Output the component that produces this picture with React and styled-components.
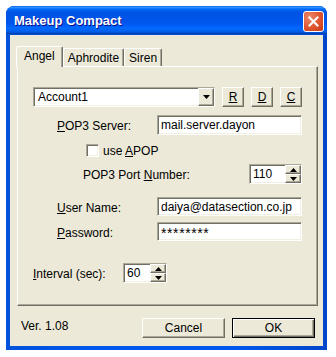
import React from "react";
import styled, { createGlobalStyle, css } from "styled-components";

const GlobalStyle = createGlobalStyle`
  body {
    margin: 0;
    background: #ffffff;
    font-family: "Liberation Sans", Arial, sans-serif;
  }
`;

const sunken = css`
  box-sizing: border-box;
  border-style: solid;
  border-width: 1px;
  border-color: #aca899 #ffffff #ffffff #aca899;
  box-shadow: inset 1px 1px #716f64, inset -1px -1px #f1efe2;
  background: #ffffff;
`;

const raised = css`
  box-sizing: border-box;
  border-style: solid;
  border-width: 1px;
  border-color: #ffffff #716f64 #716f64 #ffffff;
  box-shadow: inset -1px -1px #aca899;
  background: #ece9d8;
`;

const Page = styled.div`
  padding: 6px 0 0 6px;
`;

const Window = styled.div`
  width: 321px;
  height: 344px;
  display: flex;
  flex-direction: column;
  background: #0054e3;
  border-radius: 8px 8px 0 0;
  overflow: hidden;
`;

const TitleBar = styled.div`
  height: 29px;
  flex: none;
  display: flex;
  align-items: center;
  justify-content: space-between;
  padding: 0 3px 0 8px;
  background: linear-gradient(
    to bottom,
    #0058ee 0%,
    #3593ff 4%,
    #288eff 6%,
    #127dff 8%,
    #036ffc 10%,
    #0262ee 14%,
    #0057e5 20%,
    #0054e3 24%,
    #0055eb 56%,
    #005bf5 66%,
    #026afe 76%,
    #0062ef 86%,
    #0052d6 92%,
    #0040ab 94%,
    #0054e3 100%
  );
`;

const Title = styled.span`
  font-family: "Liberation Sans", Arial, sans-serif;
  font-weight: 700;
  font-size: 13px;
  color: #ffffff;
  text-shadow: 1px 1px #0f1089;
`;

const CloseButton = styled.div`
  width: 21px;
  height: 21px;
  box-sizing: border-box;
  border: 1px solid #ffffff;
  border-radius: 3px;
  background: radial-gradient(circle at 30% 30%, #e98a6c 0%, #e0552f 55%, #c4381a 100%);
  display: flex;
  align-items: center;
  justify-content: center;
  margin-top: 1px;
`;

const Frame = styled.div`
  flex: 1;
  display: flex;
  padding: 0 4px 4px 4px;
  background: linear-gradient(to right, #0052dc, #0058ee 30%, #0058ee 70%, #0046c8);
`;

const Client = styled.div`
  flex: 1;
  display: flex;
  flex-direction: column;
  background: #ece9d8;
  padding: 11px 5px 0 7px;
`;

const TabStrip = styled.div`
  height: 20px;
  display: flex;
  align-items: flex-end;
  margin-left: -1px;
  position: relative;
  z-index: 1;
`;

const Tab = styled.div`
  box-sizing: border-box;
  height: ${(p) => (p.$active ? 21 : 18)}px;
  margin-bottom: ${(p) => (p.$active ? -1 : 0)}px;
  padding: 0 ${(p) => (p.$active ? 7 : 4)}px;
  padding-bottom: ${(p) => (p.$active ? 2 : 0)}px;
  display: flex;
  align-items: center;
  font-size: 12px;
  color: #000000;
  background: #ece9d8;
  border-top: 1px solid #ffffff;
  border-left: 1px solid #ffffff;
  border-right: 1px solid #716f64;
  box-shadow: inset -1px 0 #aca899;
  border-radius: 2px 2px 0 0;
`;

const Panel = styled.div`
  box-sizing: border-box;
  height: 240px;
  border-style: solid;
  border-width: 1px;
  border-color: #ffffff #716f64 #716f64 #ffffff;
  box-shadow: inset -1px -1px #aca899;
  display: flex;
  flex-direction: column;
`;

const Row = styled.div`
  display: flex;
  align-items: center;
  height: ${(p) => p.$h}px;
  margin-top: ${(p) => p.$mt}px;
  padding-left: ${(p) => p.$indent}px;
  padding-right: 15px;
  gap: ${(p) => p.$gap || 0}px;
`;

const Label = styled.span`
  font-size: 12px;
  color: #000000;
  flex: ${(p) => (p.$w ? "none" : 1)};
  width: ${(p) => (p.$w ? `${p.$w}px` : "auto")};
  padding-top: 2px;
  white-space: nowrap;
`;

const U = styled.span`
  text-decoration: underline;
`;

const TextBox = styled.div`
  ${sunken};
  width: ${(p) => p.$w}px;
  height: 100%;
  flex: none;
  display: flex;
  align-items: center;
  padding-left: 3px;
  font-size: 12px;
  color: #000000;
  white-space: nowrap;
  overflow: hidden;
`;

const Masked = styled.span`
  font-size: 14px;
  letter-spacing: 0.6px;
  padding-top: 3px;
`;

const BoxText = styled.span`
  flex: 1;
  align-self: ${(p) => (p.$top ? "flex-start" : "center")};
  padding-top: ${(p) => (p.$top ? 2 : 0)}px;
`;

const Combo = styled(TextBox)`
  padding-left: 4px;
`;

const DropButton = styled.div`
  ${raised};
  width: 16px;
  height: 100%;
  flex: none;
  display: flex;
  align-items: center;
  justify-content: center;
`;

const SpinButtons = styled.div`
  width: 16px;
  height: 100%;
  flex: none;
  display: flex;
  flex-direction: column;
`;

const SpinHalf = styled.div`
  ${raised};
  flex: 1;
  display: flex;
  align-items: center;
  justify-content: center;
`;

const SmallButton = styled.div`
  ${raised};
  width: 22px;
  height: 100%;
  flex: none;
  display: flex;
  align-items: center;
  justify-content: center;
  font-size: 12px;
  color: #000000;
`;

const CheckBox = styled.div`
  ${sunken};
  width: 13px;
  height: 13px;
  flex: none;
`;

const CheckLabel = styled.span`
  font-size: 12px;
  color: #000000;
  margin-left: 4px;
`;

const Footer = styled.div`
  display: flex;
  align-items: center;
  height: 20px;
  margin-top: 12px;
  padding: 0 3px 0 4px;
  gap: 7px;
`;

const Version = styled.span`
  font-size: 12px;
  color: #000000;
  margin-right: auto;
  padding-bottom: 4px;
`;

const DialogButton = styled.div`
  ${raised};
  width: 83px;
  height: 100%;
  display: flex;
  align-items: center;
  justify-content: center;
  font-size: 12px;
  color: #000000;
  ${(p) =>
    p.$default &&
    css`
      border: 1px solid #000000;
      box-shadow: inset 1px 1px #ffffff, inset -1px -1px #716f64, inset -2px -2px #aca899;
    `}
`;

function Arrow() {
  return (
    <svg width="7" height="4" viewBox="0 0 7 4">
      <path d="M0 0h7L3.5 4z" fill="#000" />
    </svg>
  );
}

function SmallArrow({ down }) {
  return (
    <svg width="7" height="4" viewBox="0 0 7 4">
      {down ? <path d="M0 0h7L3.5 4z" fill="#000" /> : <path d="M0 4h7L3.5 0z" fill="#000" />}
    </svg>
  );
}

function Spin({ value, w }) {
  return (
    <TextBox $w={w}>
      <BoxText $top>{value}</BoxText>
      <SpinButtons>
        <SpinHalf>
          <SmallArrow />
        </SpinHalf>
        <SpinHalf>
          <SmallArrow down />
        </SpinHalf>
      </SpinButtons>
    </TextBox>
  );
}

export default function App() {
  return (
    <Page>
      <GlobalStyle />
      <Window>
        <TitleBar>
          <Title>Makeup Compact</Title>
          <CloseButton>
            <svg width="11" height="11" viewBox="0 0 11 11">
              <path d="M1.5 1.5l8 8M9.5 1.5l-8 8" stroke="#fff" strokeWidth="2" strokeLinecap="square" />
            </svg>
          </CloseButton>
        </TitleBar>
        <Frame>
          <Client>
            <TabStrip>
              <Tab $active>Angel</Tab>
              <Tab>Aphrodite</Tab>
              <Tab>Siren</Tab>
            </TabStrip>
            <Panel>
              <Row $h={20} $mt={20} $indent={15} $gap={7}>
                <Combo $w={182}>
                  <BoxText>Account1</BoxText>
                  <DropButton>
                    <Arrow />
                  </DropButton>
                </Combo>
                <SmallButton><U>R</U></SmallButton>
                <SmallButton><U>D</U></SmallButton>
                <SmallButton><U>C</U></SmallButton>
              </Row>
              <Row $h={20} $mt={8} $indent={39}>
                <Label><U>P</U>OP3 Server:</Label>
                <TextBox $w={145}>mail.server.dayon</TextBox>
              </Row>
              <Row $h={13} $mt={9} $indent={68}>
                <CheckBox />
                <CheckLabel>use <U>A</U>POP</CheckLabel>
              </Row>
              <Row $h={20} $mt={7} $indent={65}>
                <Label>POP3 Port <U>N</U>umber:</Label>
                <Spin value="110" w={53} />
              </Row>
              <Row $h={19} $mt={13} $indent={39}>
                <Label><U>U</U>ser Name:</Label>
                <TextBox $w={145}>daiya@datasection.co.jp</TextBox>
              </Row>
              <Row $h={19} $mt={6} $indent={39}>
                <Label><U>P</U>assword:</Label>
                <TextBox $w={145}><Masked>********</Masked></TextBox>
              </Row>
              <Row $h={20} $mt={22} $indent={15}>
                <Label $w={90}><U>I</U>nterval (sec):</Label>
                <Spin value="60" w={44} />
              </Row>
            </Panel>
            <Footer>
              <Version>Ver. 1.08</Version>
              <DialogButton>Cancel</DialogButton>
              <DialogButton $default>OK</DialogButton>
            </Footer>
          </Client>
        </Frame>
      </Window>
    </Page>
  );
}
